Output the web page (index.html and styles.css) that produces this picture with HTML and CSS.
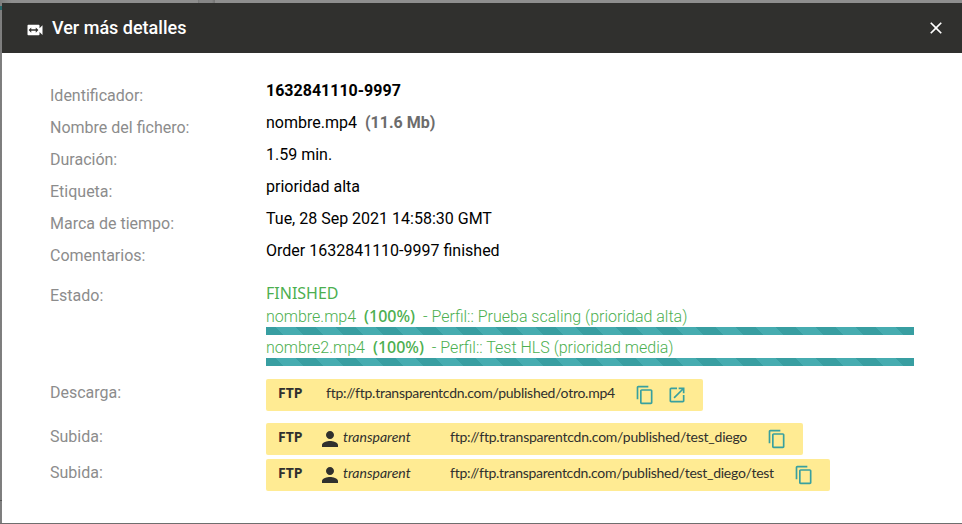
FILE: index.html
```html
<!DOCTYPE html>
<html lang="es">
<head>
<meta charset="utf-8">
<title>Ver más detalles</title>
<link rel="stylesheet" href="styles.css">
</head>
<body>
<svg class="sprite" width="0" height="0">
  <symbol id="copy" viewBox="0 0 24 24"><path d="M16 1H4c-1.1 0-2 .9-2 2v14h2V3h12V1zm3 4H8c-1.1 0-2 .9-2 2v14c0 1.1.9 2 2 2h11c1.1 0 2-.9 2-2V7c0-1.1-.9-2-2-2zm0 16H8V7h11v14z"/></symbol>
  <symbol id="open" viewBox="0 0 24 24"><path d="M19 19H5V5h7V3H5c-1.11 0-2 .9-2 2v14c0 1.1.89 2 2 2h14c1.1 0 2-.9 2-2v-7h-2v7zM14 3v2h3.59l-9.83 9.83 1.41 1.41L19 6.41V10h2V3h-7z"/></symbol>
  <symbol id="person" viewBox="0 0 24 24"><path d="M12 12c2.21 0 4-1.79 4-4s-1.79-4-4-4-4 1.79-4 4 1.79 4 4 4zm0 2c-2.67 0-8 1.34-8 4v2h16v-2c0-2.66-5.33-4-8-4z"/></symbol>
</svg>
<main class="dialog">
  <header class="titlebar">
    <svg class="camera" viewBox="0 0 24 24"><path d="M18 9.5V6c0-.55-.45-1-1-1H3c-.55 0-1 .45-1 1v12c0 .55.45 1 1 1h14c.55 0 1-.45 1-1v-3.500l4 4v-13l-4 4zm-5 6V13H7v2.500L3.500 12 7 8.500V11h6V8.500l3.500 3.500-3.500 3.500z"/></svg>
    <h1>Ver más detalles</h1>
    <svg class="close" viewBox="0 0 24 24"><path d="M19 6.41L17.590 5 12 10.590 6.410 5 5 6.410 10.590 12 5 17.590 6.410 19 12 13.410 17.590 19 19 17.590 13.410 12z"/></svg>
  </header>
  <dl class="details">
    <dt>Identificador:</dt><dd><b>1632841110-9997</b></dd>
    <dt>Nombre del fichero:</dt><dd>nombre.mp4 <b class="size">(11.6 Mb)</b></dd>
    <dt>Duración:</dt><dd>1.59 min.</dd>
    <dt>Etiqueta:</dt><dd>prioridad alta</dd>
    <dt>Marca de tiempo:</dt><dd>Tue, 28 Sep 2021 14:58:30 GMT</dd>
    <dt>Comentarios:</dt><dd>Order 1632841110-9997 finished</dd>
  </dl>
  <section class="row status">
    <div class="label">Estado:</div>
    <div class="progress">
      <div class="state">FINISHED</div>
      <div class="job">nombre.mp4 <b>(100%)</b> - Perfil:: Prueba scaling (prioridad alta)</div>
      <div class="bar"></div>
      <div class="job">nombre2.mp4 <b>(100%)</b> - Perfil:: Test HLS (prioridad media)</div>
      <div class="bar"></div>
    </div>
  </section>
  <section class="row download">
    <div class="label">Descarga:</div>
    <div class="chip"><b>FTP</b><span class="url">ftp://ftp.transparentcdn.com/published/otro.mp4</span><svg class="action"><use href="#copy"/></svg><svg class="action"><use href="#open"/></svg></div>
  </section>
  <section class="row upload">
    <div class="label">Subida:</div>
    <div class="chip diego"><b>FTP</b><svg class="person"><use href="#person"/></svg><i>transparent</i><span class="url">ftp://ftp.transparentcdn.com/published/test_diego</span><svg class="action"><use href="#copy"/></svg></div>
  </section>
  <section class="row upload">
    <div class="label">Subida:</div>
    <div class="chip test"><b>FTP</b><svg class="person"><use href="#person"/></svg><i>transparent</i><span class="url">ftp://ftp.transparentcdn.com/published/test_diego/test</span><svg class="action"><use href="#copy"/></svg></div>
  </section>
</main>
</body>
</html>
```
FILE: styles.css
```css
* { box-sizing: border-box; }
body {
  margin: 0;
  height: 524px;
  padding: 3px 0 1px 2px;
  overflow: hidden;
  background:
    linear-gradient(#2b6669, #2b6669) 0 6px / 2px 4px no-repeat,
    linear-gradient(90deg, #777, #868686 2px, #868686 14px, #777 16px) 198px 0 / 17px 3px no-repeat,
    linear-gradient(#555, #555) 0 500px / 2px 1px no-repeat,
    linear-gradient(#6e6e6e, #6e6e6e) 0 523px / 100% 1px no-repeat,
    linear-gradient(90deg, #7d7d7d, #8e8e8e 12px);
  font: 16px/24px Roboto, sans-serif;
  color: #000;
}
.sprite { position: absolute; }
.dialog { height: 520px; background: #fff; }
.titlebar {
  height: 50px;
  display: flex;
  align-items: center;
  padding: 0 16px 0 24px;
  background: #30302e;
  color: #fff;
}
.titlebar svg { fill: currentColor; }
.camera { width: 18px; height: 18px; margin-top: 4px; }
h1 { margin: 0 auto 0 8px; font-size: 18px; font-weight: 500; line-height: 24px; }
.close { width: 20px; height: 20px; }
.details {
  display: grid;
  grid-template-columns: 216px 1fr;
  grid-auto-rows: 32px;
  margin: 0;
  padding: 26px 48px 0;
}
dt, .label { color: #8c8c8c; }
dt { padding-top: 5px; }
dd { margin: 0; }
.size { margin-left: 4px; color: #6c6c6c; }
.row { display: grid; grid-template-columns: 216px 1fr; padding: 0 48px; }
.status { height: 108px; }
.status .label { padding-top: 13px; }
.progress { padding-top: 10px; color: #4caf50; }
.state { font-family: "Noto Sans", sans-serif; font-size: 16px; line-height: 25px; height: 24px; }
.job { height: 22px; line-height: 24px; font-weight: 300; }
.job b { margin: 0 4px; font-family: "Noto Sans", sans-serif; font-size: 16px; font-weight: 500; line-height: 20px; }
.bar {
  height: 8px;
  margin-bottom: 1px;
  background: #389ea1 linear-gradient(45deg, #46acb0 25%, transparent 25%, transparent 50%, #46acb0 50%, #46acb0 75%, transparent 75%) 10px 0 / 40px 40px;
}
.download { height: 44px; }
.upload { height: 36px; }
.download .label, .upload .label { padding-top: 2px; }
.chip {
  display: flex;
  align-items: center;
  justify-self: start;
  width: 437px;
  height: 32px;
  padding-left: 12px;
  border-radius: 2px;
  background: #ffeb93;
  color: #30302e;
  font: 14px/20px Lato, sans-serif;
  white-space: nowrap;
}
.chip.diego { width: 537px; }
.chip.test { width: 564px; }
.chip b { width: 48px; padding-bottom: 4px; font-family: "Noto Sans", sans-serif; }
.chip i { width: 107px; padding-bottom: 4px; }
.chip .url { width: 309px; padding-bottom: 4px; letter-spacing: -.26px; }
.chip.diego .url { width: 317px; letter-spacing: -.24px; }
.chip.test .url { width: 344px; letter-spacing: -.27px; }
.chip svg { flex: none; }
.action { width: 20px; height: 20px; margin-right: 12px; fill: #38a09f; }
.person { width: 24px; height: 24px; margin: 0 1px 0 -8px; fill: #30302e; }
```
